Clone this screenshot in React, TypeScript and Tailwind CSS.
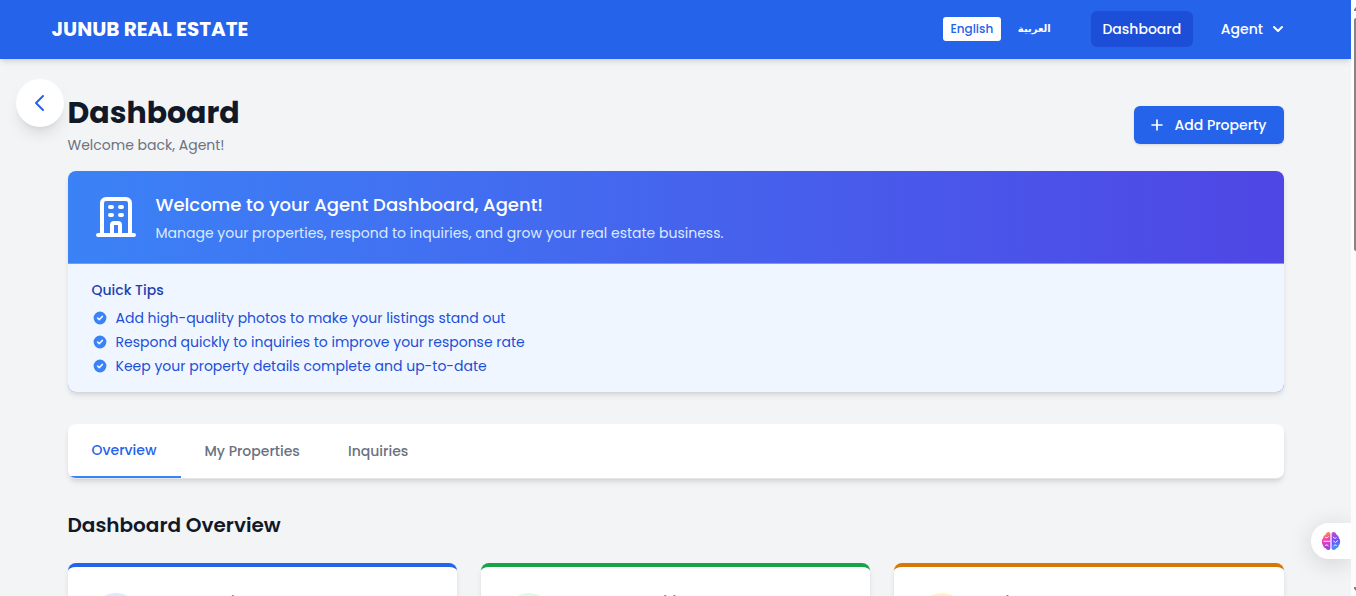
import React from "react";

const tips = [
  "Add high-quality photos to make your listings stand out",
  "Respond quickly to inquiries to improve your response rate",
  "Keep your property details complete and up-to-date",
];

const stats = [
  { label: "My Properties", border: "border-[#2563eb]", circle: "bg-[#dbeafe]" },
  { label: "Property Inquiries", border: "border-[#16a34a]", circle: "bg-[#dcfce7]" },
  { label: "Active", border: "border-[#d97706]", circle: "bg-[#fef3c7]" },
];

function Header() {
  return (
    <header className="z-10 flex h-[59px] shrink-0 items-center justify-between bg-[#2563eb] pr-[63px] pb-px pl-[51.5px] text-white shadow-md">
      <span className="text-xl font-bold">JUNUB REAL ESTATE</span>
      <nav className="flex items-center text-sm font-medium">
        <button className="h-6 w-[58px] rounded-[3px] bg-white text-xs font-medium text-[#2563eb]">English</button>
        <button className="ml-[17px] w-[33px] pt-px font-['DejaVu_Sans',sans-serif] text-[10px] font-bold whitespace-nowrap">
          العربية
        </button>
        <a className="ml-10 flex h-9 w-[102px] items-center justify-center rounded-md bg-[#1d4ed8]">Dashboard</a>
        <button className="ml-7 flex items-center">
          Agent
          <svg className="ml-[5px] size-5" viewBox="0 0 20 20" fill="currentColor">
            <path
              fillRule="evenodd"
              clipRule="evenodd"
              d="M5.293 7.293a1 1 0 011.414 0L10 10.586l3.293-3.293a1 1 0 111.414 1.414l-4 4a1 1 0 01-1.414 0l-4-4a1 1 0 010-1.414z"
            />
          </svg>
        </button>
      </nav>
    </header>
  );
}

function WelcomeCard() {
  return (
    <section className="mt-4 h-[221px] overflow-hidden rounded-lg bg-linear-to-r/srgb from-[#3b82f6] to-[#4f46e5] shadow-md">
      <div className="flex h-[92px] items-center pl-6 text-white">
        <svg className="size-12" viewBox="0 0 24 24" fill="none" stroke="currentColor" strokeWidth={2} strokeLinecap="round" strokeLinejoin="round">
          <path d="M19 21V5a2 2 0 00-2-2H7a2 2 0 00-2 2v16m14 0h2m-2 0h-5m-9 0H3m2 0h5M9 7h1m-1 4h1m4-4h1m-1 4h1m-5 10v-5a1 1 0 011-1h2a1 1 0 011 1v5m-4 0h4" />
        </svg>
        <div className="ml-4">
          <h2 className="pt-0.5 text-lg leading-7 font-medium">Welcome to your Agent Dashboard, Agent!</h2>
          <p className="mt-0.5 text-sm leading-6 text-[#dbeafe]">
            Manage your properties, respond to inquiries, and grow your real estate business.
          </p>
        </div>
      </div>
      <div className="h-[129px] border-t border-[#60a5fa] bg-[#eff6ff] pt-4 pl-6">
        <h3 className="text-sm leading-5 font-medium text-[#1e40af]">Quick Tips</h3>
        <ul className="mt-2 flex flex-col gap-1 text-sm leading-5 text-[#1d4ed8]">
          {tips.map((tip) => (
            <li key={tip} className="flex items-center">
              <svg className="mr-2 size-4 text-[#3b82f6]" viewBox="0 0 20 20" fill="currentColor">
                <path
                  fillRule="evenodd"
                  clipRule="evenodd"
                  d="M10 18a8 8 0 100-16 8 8 0 000 16zm3.707-9.293a1 1 0 00-1.414-1.414L9 10.586 7.707 9.293a1 1 0 00-1.414 1.414l2 2a1 1 0 001.414 0l4-4z"
                />
              </svg>
              <span>{tip}</span>
            </li>
          ))}
        </ul>
      </div>
    </section>
  );
}

function Tabs() {
  return (
    <nav className="mt-8 flex h-[55px] shrink-0 overflow-hidden rounded-lg border-b border-[#e5e7eb] bg-white text-sm font-medium text-[#6b7280] shadow-md">
      <button className="w-[113px] border-b-2 border-[#3b82f6] pl-6 text-left text-[#2563eb]">Overview</button>
      <button className="w-[143.5px] pl-6 text-left">My Properties</button>
      <button className="w-[108px] pl-6 text-left">Inquiries</button>
    </nav>
  );
}

function AssistantTab() {
  return (
    <div className="absolute top-[523px] left-[1311px] z-20 flex h-9 w-10 items-center rounded-l-full bg-white pl-[10px] shadow-[0_4px_24px_rgba(0,0,0,0.14)] [clip-path:inset(-40px_0_-40px_-60px)]">
      <svg className="size-5" viewBox="0 0 20 20" fill="none">
        <defs>
          <linearGradient id="brainLeft" x1="2" y1="3" x2="9" y2="18" gradientUnits="userSpaceOnUse">
            <stop offset="0" stopColor="#ff9a3c" />
            <stop offset="0.35" stopColor="#f93fb0" />
            <stop offset="1" stopColor="#8b3ff5" />
          </linearGradient>
          <linearGradient id="brainRight" x1="12" y1="1" x2="17" y2="18" gradientUnits="userSpaceOnUse">
            <stop offset="0" stopColor="#c04be0" />
            <stop offset="0.5" stopColor="#6d50f0" />
            <stop offset="1" stopColor="#3b9cfb" />
          </linearGradient>
        </defs>
        <path
          fill="url(#brainLeft)"
          d="M9.4 3v14c0 1.300-.9 2-2 2-1.300 0-2.200-.7-2.600-1.700C3.300 17 2.300 16 2.300 14.500 1.300 13.500.9 12.300.9 10.500c0-1.500.4-2.500 1.300-3.400 0-1.700.9-2.900 2.300-3.300C4.900 2 6 1 7.400 1c1.100 0 2 .8 2 2z"
        />
        <path
          fill="url(#brainRight)"
          d="M10.600 3v14c0 1.300.9 2 2 2 1.300 0 2.200-.7 2.600-1.700 1.500-.3 2.500-1.300 2.500-2.800 1-1 1.400-2.200 1.400-4 0-1.500-.4-2.500-1.300-3.400 0-1.700-.9-2.900-2.300-3.300C15.100 2 14 1 12.600 1c-1.100 0-2 .8-2 2z"
        />
        <path
          stroke="white"
          strokeWidth={0.9}
          strokeLinecap="round"
          d="M3 10.300h6M4.500 6.500c1 .6 2.300.4 3-.8M4.500 14.300c.8-.8 2.300-.6 2.800.6M12.300 6.200c.5 1.200 1.800 1.500 2.900.7M12.500 10l2 1.500 2.200-2M12.600 15c.6-1.200 1.800-1.300 2.800-.7"
        />
      </svg>
    </div>
  );
}

function Scrollbar() {
  return (
    <div className="flex w-[5px] shrink-0 flex-col items-end justify-between bg-[#fcfcfc]">
      <div>
        <svg className="mt-[7px] h-1 w-0.5" viewBox="0 0 2 4" fill="#7d7d7d">
          <path d="M2 0L0 2.500V4h2z" />
        </svg>
        <div className="mt-[7px] h-[233px] w-0.5 rounded-l-full bg-[#858585]" />
      </div>
      <svg className="mb-[5px] h-1 w-0.5" viewBox="0 0 2 4" fill="#7d7d7d">
        <path d="M0 0h2v4L0 1.500z" />
      </svg>
    </div>
  );
}

export default function App() {
  return (
    <div className="relative flex h-[596px] w-[1356px] overflow-hidden bg-[#f3f4f6] font-['Poppins','Inter','Noto_Sans',sans-serif]">
      <div className="flex min-w-0 flex-1 flex-col overflow-hidden">
        <Header />
        <main className="flex flex-col px-[67.5px]">
          <div className="flex h-24 shrink-0 items-start justify-between">
            <div className="pt-9">
              <h1 className="text-3xl leading-9 font-bold text-[#111827]">Dashboard</h1>
              <p className="mt-1 text-sm leading-5 text-[#6b7280]">Welcome back, Agent!</p>
            </div>
            <button className="mt-[47px] flex h-[38px] w-[150px] items-center rounded-md bg-[#2563eb] pl-[13px] text-sm font-medium text-white shadow-sm">
              <svg className="mr-2 size-5" viewBox="0 0 24 24" fill="none" stroke="currentColor" strokeWidth={2} strokeLinecap="round" strokeLinejoin="round">
                <path d="M12 6v12M6 12h12" />
              </svg>
              Add Property
            </button>
          </div>
          <WelcomeCard />
          <Tabs />
          <h2 className="mt-8 text-xl leading-7 font-semibold text-[#111827]">Dashboard Overview</h2>
          <div className="mt-6 grid grid-cols-3 gap-6">
            {stats.map((s) => (
              <div key={s.label} className={`flex h-[120px] rounded-lg border-t-4 bg-white px-6 pt-[26px] shadow-md ${s.border}`}>
                <div className={`size-12 shrink-0 rounded-full ${s.circle}`} />
                <p className="-mt-0.5 ml-4 text-sm leading-5 font-medium text-[#6b7280]">{s.label}</p>
              </div>
            ))}
          </div>
        </main>
      </div>
      <Scrollbar />
      <button className="absolute top-[79px] left-4 z-20 flex size-12 items-center justify-center rounded-full bg-white text-[#2563eb] shadow-lg">
        <svg className="size-6" viewBox="0 0 24 24" fill="none" stroke="currentColor" strokeWidth={2} strokeLinecap="round" strokeLinejoin="round">
          <path d="M15 19l-7-7 7-7" />
        </svg>
      </button>
      <AssistantTab />
    </div>
  );
}
